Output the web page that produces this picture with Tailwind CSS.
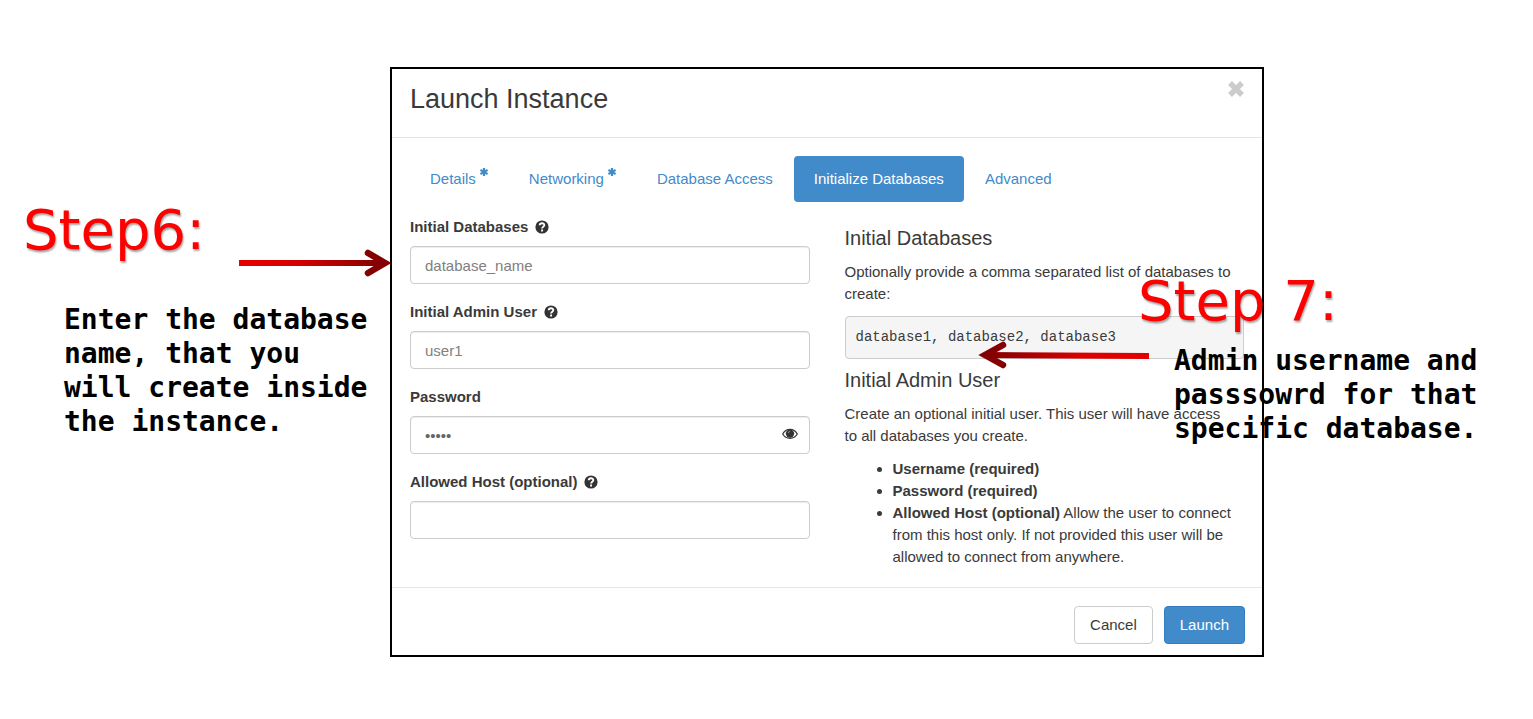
<!DOCTYPE html>
<html lang="en">
  <head>
    <meta charset="UTF-8" />
    <meta name="viewport" content="width=device-width, initial-scale=1.0" />
    <title>Launch Instance</title>
    <script src="https://cdn.jsdelivr.net/npm/@tailwindcss/browser@4"></script>
  </head>
  <body class="bg-white">
    <main class="relative flex items-start pt-[67px]">
      <!-- Step 6 -->
      <aside class="w-[390px] shrink-0 pt-[130px] pl-[23px]">
        <h2 class="text-[56px] leading-[66px] text-[#ff0000] font-['DejaVu_Sans',sans-serif] text-shadow-[1px_2px_2px_rgb(0_0_0/0.35)]">Step6:</h2>
        <p class="mt-10 ml-[41px] text-[28px] leading-[34px] font-bold text-black whitespace-nowrap font-['DejaVu_Sans_Mono',monospace]">
          Enter the database<br />
          name, that you<br />
          will create inside<br />
          the instance.
        </p>
      </aside>

      <!-- Dialog -->
      <section class="flex-1 border-2 border-black bg-white text-[15px] leading-[22px] text-[#3a3a3a] font-['Liberation_Sans',Arial,sans-serif]">
        <header class="flex items-start justify-between border-b border-[#e5e5e5] px-[18px] pb-[22px]">
          <h1 class="pt-[14px] text-[27px] leading-[32px]">Launch Instance</h1>
          <button type="button" aria-label="Close" class="mt-3 text-[#ccc]">
            <svg class="size-4" viewBox="0 0 16 16" fill="none" stroke="currentColor" stroke-width="5.5">
              <path d="M2 2l12 12M14 2L2 14" />
            </svg>
          </button>
        </header>

        <div class="px-[18px] pt-[18px] pb-[19px]">
          <nav class="flex gap-px text-[#428bca]">
            <a href="#" class="flex px-5 py-3">Details
              <svg class="ml-1 size-2" viewBox="0 0 8 8" stroke="currentColor" stroke-width="2.2"><path d="M4 0v8M.4 2l7.2 4M7.6 2L.4 6" /></svg>
            </a>
            <a href="#" class="flex px-5 py-3">Networking
              <svg class="ml-1 size-2" viewBox="0 0 8 8" stroke="currentColor" stroke-width="2.2"><path d="M4 0v8M.4 2l7.2 4M7.6 2L.4 6" /></svg>
            </a>
            <a href="#" class="px-5 py-3">Database Access</a>
            <a href="#" class="rounded bg-[#428bca] px-5 py-3 text-white">Initialize Databases</a>
            <a href="#" class="px-5 py-3">Advanced</a>
          </nav>

          <div class="grid grid-cols-2 gap-[35px] pt-[14px]">
            <!-- Fields -->
            <form class="flex flex-col gap-[17px]">
              <div>
                <label for="databases" class="mb-2 flex items-center gap-[7px] font-bold">Initial Databases
                  <svg class="size-[14px]" viewBox="0 0 14 14"><circle cx="7" cy="7" r="6.6" fill="#333" /><path d="M4.7 5.3C4.8 2.6 9.4 2.7 9.3 5.2C9.2 6.7 7.1 6.7 7.1 8.4M7.1 9.4v2" fill="none" stroke="#fff" stroke-width="1.9" /></svg>
                </label>
                <input id="databases" type="text" placeholder="database_name" class="block h-[38px] w-full rounded border border-[#ccc] px-[14px] inset-shadow-[0_1px_1px_rgb(0_0_0/0.075)] placeholder:text-[#808080]" />
              </div>
              <div>
                <label for="user" class="mb-2 flex items-center gap-[7px] font-bold">Initial Admin User
                  <svg class="size-[14px]" viewBox="0 0 14 14"><circle cx="7" cy="7" r="6.6" fill="#333" /><path d="M4.7 5.3C4.8 2.6 9.4 2.7 9.3 5.2C9.2 6.7 7.1 6.7 7.1 8.4M7.1 9.4v2" fill="none" stroke="#fff" stroke-width="1.9" /></svg>
                </label>
                <input id="user" type="text" placeholder="user1" class="block h-[38px] w-full rounded border border-[#ccc] px-[14px] inset-shadow-[0_1px_1px_rgb(0_0_0/0.075)] placeholder:text-[#808080]" />
              </div>
              <div>
                <label for="password" class="mb-2 block font-bold">Password</label>
                <div class="relative">
                  <input id="password" type="password" value="12345" class="block h-[38px] w-full rounded border border-[#ccc] px-[14px] text-[#666] inset-shadow-[0_1px_1px_rgb(0_0_0/0.075)]" />
                  <button type="button" aria-label="Show password" class="absolute top-3 right-3">
                    <svg class="h-3 w-4" viewBox="0 0 16 12" fill="none" stroke="#333">
                      <path d="M.7 6C4 -.2 12 -.2 15.3 6C12 11.8 4 11.8 .7 6Z" stroke-width="1.2" />
                      <circle cx="8" cy="5.6" r="4.2" fill="#333" stroke="none" />
                      <path d="M6.2 5Q6.4 3.6 8 3.4" stroke="#ccc" stroke-width=".6" />
                    </svg>
                  </button>
                </div>
              </div>
              <div>
                <label for="host" class="mb-2 flex items-center gap-[7px] font-bold">Allowed Host (optional)
                  <svg class="size-[14px]" viewBox="0 0 14 14"><circle cx="7" cy="7" r="6.6" fill="#333" /><path d="M4.7 5.3C4.8 2.6 9.4 2.7 9.3 5.2C9.2 6.7 7.1 6.7 7.1 8.4M7.1 9.4v2" fill="none" stroke="#fff" stroke-width="1.9" /></svg>
                </label>
                <input id="host" type="text" class="block h-[38px] w-full rounded border border-[#ccc] px-[14px] inset-shadow-[0_1px_1px_rgb(0_0_0/0.075)]" />
              </div>
            </form>

            <!-- Help text -->
            <div class="pt-[10px]">
              <h2 class="text-[20px] leading-6">Initial Databases</h2>
              <p class="mt-[11px]">Optionally provide a comma separated list of databases to create:</p>
              <pre class="mt-[11px] rounded border border-[#ccc] bg-[#f5f5f5] px-[10px] py-[9px] text-[14px] leading-[23px] font-['Liberation_Mono',monospace]">database1, database2, database3</pre>
              <h2 class="mt-[9px] text-[20px] leading-6">Initial Admin User</h2>
              <p class="mt-[11px] pr-3">Create an optional initial user. This user will have access to all databases you create.</p>
              <ul class="mt-[11px] list-disc pl-12">
                <li><b>Username (required)</b></li>
                <li><b>Password (required)</b></li>
                <li><b>Allowed Host (optional)</b> Allow the user to connect from this host only. If not provided this user will be allowed to connect from anywhere.</li>
              </ul>
            </div>
          </div>
        </div>

        <footer class="flex justify-end gap-[11px] border-t border-[#e5e5e5] px-[17px] pt-[18px] pb-[11px]">
          <button type="button" class="h-[38px] rounded border border-[#ccc] bg-white px-[15px]">Cancel</button>
          <button type="button" class="h-[38px] rounded border border-[#357ebd] bg-[#428bca] px-[15px] text-white">Launch</button>
        </footer>
      </section>

      <!-- Step 7, lies over the right edge of the dialog -->
      <aside class="relative w-[269px] shrink-0">
        <div class="absolute top-[201px] right-[55px] w-[340px]">
          <h2 class="text-[56px] leading-[66px] text-[#ff0000] font-['DejaVu_Sans',sans-serif] text-shadow-[1px_2px_2px_rgb(0_0_0/0.35)]">Step 7:</h2>
          <p class="mt-[10px] ml-9 text-[28px] leading-[34px] font-bold text-black whitespace-nowrap font-['DejaVu_Sans_Mono',monospace]">
            Admin username and<br />
            passsowrd for that<br />
            specific database.
          </p>
        </div>
      </aside>

      <!-- Arrows -->
      <svg class="absolute top-[248px] left-[238px] h-[30px] w-[154px]" viewBox="0 0 154 30">
        <defs>
          <linearGradient id="right-arrow" gradientUnits="userSpaceOnUse" x1="0" y1="0" x2="154" y2="0">
            <stop offset="0" stop-color="#e60000" />
            <stop offset=".4" stop-color="#d40000" />
            <stop offset="1" stop-color="#780000" />
          </linearGradient>
        </defs>
        <path d="M1 15H146" stroke="url(#right-arrow)" stroke-width="6" />
        <path d="M130 5L147 15L130 25" fill="none" stroke="#850000" stroke-width="6.5" stroke-linecap="round" />
      </svg>
      <svg class="absolute top-[340px] right-[383px] h-[30px] w-[172px]" viewBox="0 0 172 30">
        <defs>
          <linearGradient id="left-arrow" gradientUnits="userSpaceOnUse" x1="172" y1="0" x2="0" y2="0">
            <stop offset="0" stop-color="#e60000" />
            <stop offset=".4" stop-color="#dc0000" />
            <stop offset="1" stop-color="#780000" />
          </linearGradient>
        </defs>
        <path d="M171 16L8 15" stroke="url(#left-arrow)" stroke-width="6" />
        <path d="M25 5L7 15L25 25" fill="none" stroke="#850000" stroke-width="6.5" stroke-linecap="round" />
      </svg>
    </main>
  </body>
</html>
